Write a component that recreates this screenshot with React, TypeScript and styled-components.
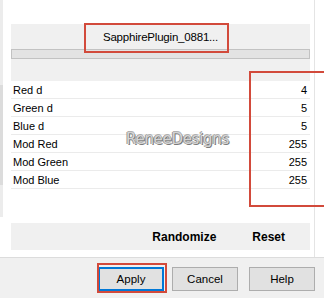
import React from 'react';
import styled, { createGlobalStyle } from 'styled-components';

const GlobalStyle = createGlobalStyle`
  html, body {
    margin: 0;
    padding: 0;
    background: #ffffff;
  }
  body {
    font-family: 'Liberation Sans', Arial, sans-serif;
    color: #000000;
  }
`;

const Page = styled.div`
  position: relative;
  width: 324px;
  height: 298px;
  overflow: hidden;
  display: flex;
  flex-direction: column;
`;

const Upper = styled.div`
  height: 257px;
  display: flex;
  background: #ffffff;
  border-bottom: 1px solid #dcdcdc;
`;

const LeftStrip = styled.div`
  width: 3px;
  height: 217px;
  background: linear-gradient(
    to bottom,
    #ececec 0,
    #ececec 85px,
    #dcdcdc 85px,
    #dcdcdc 185px,
    #ececec 185px
  );
`;

const Panel = styled.div`
  width: 299px;
  margin-left: 8px;
  padding-top: 24px;
  display: flex;
  flex-direction: column;
`;

const RightLine = styled.div`
  width: 1px;
  margin-left: 4px;
  background: #e4e4e4;
`;

const Header = styled.div`
  background: #f0f0f0;
  height: 57px;
  display: flex;
  flex-direction: column;
`;

const Title = styled.div`
  height: 25px;
  display: flex;
  align-items: center;
  justify-content: center;
  font-size: 11.5px;
  letter-spacing: -0.2px;
  color: #000;
`;

const Bar = styled.div`
  height: 8px;
  background: #e3e3e3;
  border: 1px solid #c2c2c2;
`;

const List = styled.div`
  display: flex;
  flex-direction: column;
  background: #ffffff;
`;

const Row = styled.div`
  height: 17px;
  display: flex;
  align-items: center;
  justify-content: space-between;
  padding: 0 3px 0 2px;
  border-bottom: 1px solid #ebebeb;
  font-size: 11px;
`;

const Spacer = styled.div<{ $h: number }>`
  height: ${({ $h }) => $h}px;
`;

const ActionBand = styled.div`
  height: 27px;
  background: #f0f0f0;
  display: flex;
  align-items: center;
  justify-content: flex-end;
  padding-right: 25px;
  gap: 36px;
  font-size: 12px;
  font-weight: bold;
`;

const Footer = styled.div`
  flex: 1;
  background: #f0f0f0;
  display: flex;
  align-items: flex-start;
  padding: 9px 0 0 98px;
`;

const DialogButton = styled.div<{ $focused?: boolean; $gap?: number }>`
  box-sizing: border-box;
  width: 66px;
  height: 24px;
  margin-left: ${({ $gap }) => $gap ?? 0}px;
  display: flex;
  align-items: center;
  justify-content: center;
  background: #e1e1e1;
  border: ${({ $focused }) => ($focused ? '2px solid #0078d7' : '1px solid #adadad')};
  font-size: 11.5px;
`;

const Mark = styled.div<{ $x: number; $y: number; $w: number; $h: number }>`
  position: absolute;
  left: ${({ $x }) => $x}px;
  top: ${({ $y }) => $y}px;
  width: ${({ $w }) => $w}px;
  height: ${({ $h }) => $h}px;
  box-sizing: border-box;
  border: 2px solid #d24a3b;
  pointer-events: none;
`;

const Watermark = styled.div`
  position: absolute;
  left: 126px;
  top: 130px;
  font-family: 'DejaVu Sans', Verdana, sans-serif;
  font-size: 15px;
  letter-spacing: -0.3px;
  color: #d4d4d4;
  text-shadow: 1px 1px 0 #7a7a7a, -1px 0 0 #9a9a9a, 0 -1px 0 #b0b0b0;
  pointer-events: none;
`;

const rows: [string, number][] = [
  ['Red d', 4],
  ['Green d', 5],
  ['Blue d', 5],
  ['Mod Red', 255],
  ['Mod Green', 255],
  ['Mod Blue', 255],
];

export default function App() {
  return (
    <Page>
      <GlobalStyle />
      <Upper>
        <LeftStrip />
        <Panel>
          <Header>
            <Title>SapphirePlugin_0881...</Title>
            <Bar />
          </Header>
          <List>
            {rows.map(([label, value]) => (
              <Row key={label}>
                <span>{label}</span>
                <span>{value}</span>
              </Row>
            ))}
          </List>
          <Spacer $h={34} />
          <ActionBand>
            <span>Randomize</span>
            <span>Reset</span>
          </ActionBand>
        </Panel>
        <RightLine />
      </Upper>
      <Footer>
        <DialogButton $focused>Apply</DialogButton>
        <DialogButton $gap={8}>Cancel</DialogButton>
        <DialogButton $gap={11}>Help</DialogButton>
      </Footer>
      <Watermark>ReneeDesigns</Watermark>
      <Mark $x={84} $y={23} $w={145} $h={30} />
      <Mark $x={249} $y={71} $w={90} $h={136} />
      <Mark $x={97} $y={263} $w={70} $h={30} />
    </Page>
  );
}
